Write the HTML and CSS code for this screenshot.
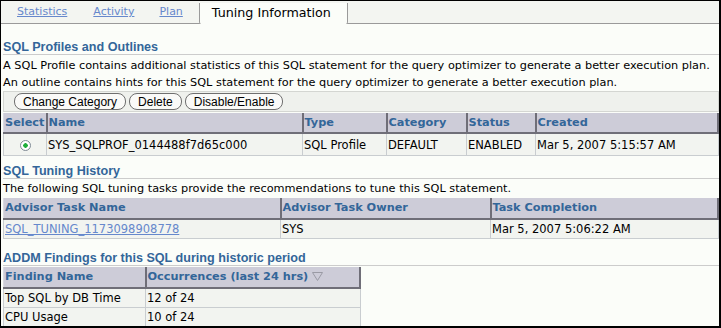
FILE: index.html
```html
<!DOCTYPE html>
<html>
<head>
<meta charset="utf-8">
<link rel="stylesheet" href="styles.css">
</head>
<body>
<div class="frame">
  <div class="tabs">
    <a class="tab tab-stats" href="#">Statistics</a>
    <a class="tab tab-act" href="#">Activity</a>
    <a class="tab tab-plan" href="#">Plan</a>
    <span class="tab active">Tuning Information</span>
  </div>

  <div class="content">
    <h2 class="heading first">SQL Profiles and Outlines</h2>
    <p class="desc">A SQL Profile contains additional statistics of this SQL statement for the query optimizer to generate a better execution plan.<br>An outline contains hints for this SQL statement for the query optimizer to generate a better execution plan.</p>
    <div class="toolbar">
      <button class="btn">Change Category</button>
      <button class="btn">Delete</button>
      <button class="btn">Disable/Enable</button>
    </div>
    <table class="grid t1">
      <colgroup><col class="c-sel"><col class="c-name"><col class="c-type"><col class="c-cat"><col class="c-status"><col></colgroup>
      <thead>
        <tr><th>Select</th><th>Name</th><th>Type</th><th>Category</th><th>Status</th><th>Created</th></tr>
      </thead>
      <tbody>
        <tr class="tall"><td class="center"><span class="radio"></span></td><td>SYS_SQLPROF_0144488f7d65c000</td><td>SQL Profile</td><td>DEFAULT</td><td>ENABLED</td><td>Mar 5, 2007 5:15:57 AM</td></tr>
      </tbody>
    </table>

    <h2 class="heading second">SQL Tuning History</h2>
    <p class="desc single">The following SQL tuning tasks provide the recommendations to tune this SQL statement.</p>
    <table class="grid t2">
      <colgroup><col class="c-task"><col class="c-owner"><col></colgroup>
      <thead>
        <tr><th>Advisor Task Name</th><th>Advisor Task Owner</th><th>Task Completion</th></tr>
      </thead>
      <tbody>
        <tr><td><a class="link" href="#">SQL_TUNING_1173098908778</a></td><td>SYS</td><td>Mar 5, 2007 5:06:22 AM</td></tr>
      </tbody>
    </table>

    <h2 class="heading third">ADDM Findings for this SQL during historic period</h2>
    <table class="grid t3">
      <colgroup><col class="c-find"><col></colgroup>
      <thead>
        <tr><th>Finding Name</th><th>Occurrences (last 24 hrs) <svg class="sort" width="11" height="9" viewBox="0 0 11 9"><polygon points="0.5,0.5 10.5,0.5 5.5,8.5" fill="none" stroke="#9a9aa4" stroke-width="1"/></svg></th></tr>
      </thead>
      <tbody>
        <tr><td>Top SQL by DB Time</td><td>12 of 24</td></tr>
        <tr><td>CPU Usage</td><td>10 of 24</td></tr>
      </tbody>
    </table>
  </div>
</div>
</body>
</html>
```

FILE: styles.css
```css
html, body {
  margin: 0;
  padding: 0;
  background: #fbfdf9;
}
.frame {
  box-sizing: border-box;
  width: 721px;
  height: 328px;
  border-style: solid;
  border-color: #000;
  border-width: 1px 2px 2px 1px;
  background: #fbfdf9;
  font-family: "DejaVu Sans", Verdana, sans-serif;
  font-size: 11.5px;
  color: #000;
  overflow: hidden;
}
.tabs {
  display: flex;
  align-items: flex-end;
  height: 22px;
  background: #f3f5f1;
  border-bottom: 1px solid #9a9a9a;
  padding-left: 16px;
}
.tab {
  font-size: 11px;
  color: #6688cc;
  text-decoration: underline;
  line-height: 22px;
}
.tab-stats { margin-right: 26px; }
.tab-act { margin-right: 25px; }
.tab-plan { margin-right: 16px; }
.tab.active {
  color: #000;
  text-decoration: none;
  font-size: 12.7px;
  background: #fbfdf9;
  border-left: 1px solid #9a9a9a;
  border-right: 1px solid #9a9a9a;
  border-radius: 0 0 2px 2px;
  height: 21px;
  line-height: 20px;
  padding: 0 16px 0 12px;
  margin-bottom: -1px;
}
.content {
  padding: 0 0 0 2px;
}
.heading {
  margin: 0;
  font-family: "Liberation Sans", Arial, sans-serif;
  font-size: 12.6px;
  font-weight: bold;
  color: #336699;
  line-height: 14px;
  border-bottom: 1px solid #cccccc;
}
.heading.first { margin-top: 16px; }
.heading.second { margin-top: 8px; }
.heading.third { margin-top: 12px; }
.desc {
  margin: 0;
  font-size: 11.3px;
  line-height: 17px;
  padding-top: 2px;
  white-space: nowrap;
}
.desc.single {
  padding-top: 1px;
}
.toolbar {
  display: flex;
  gap: 3px;
  background: #eff1ed;
  border: 1px solid #d4d6d2;
  padding: 1px 10px 0 10px;
  height: 18px;
}
.btn {
  font-family: "Liberation Sans", Arial, sans-serif;
  font-size: 12px;
  color: #000;
  background: #fafaf8;
  border: 1px solid #6f6f6f;
  border-radius: 8px;
  height: 17px;
  padding: 0 8px;
  line-height: 14px;
}
.grid {
  border-collapse: collapse;
  width: 716px;
  table-layout: fixed;
  margin-top: 1px;
}
.grid th {
  background: #cdccd8;
  color: #336699;
  font-weight: bold;
  font-size: 11.3px;
  text-align: left;
  height: 20px;
  padding: 0 1px;
  line-height: 14px;
  border-right: 2px solid #6f6e78;
  border-bottom: 2px solid #6f6e78;
  border-left: 1px solid #d8d8e0;
  white-space: nowrap;
}
.t1 th {
  height: 19px;
}
.grid td {
  background: #f2f4f0;
  border: 1px solid #c9cdd0;
  padding: 0 1px;
  height: 18px;
  line-height: 14px;
  white-space: nowrap;
}
.grid tr.tall td {
  height: 21px;
}
.center {
  text-align: center;
}
.c-sel { width: 43px; }
.c-name { width: 256px; }
.c-type { width: 84px; }
.c-cat { width: 80px; }
.c-status { width: 69px; }
.c-task { width: 277px; }
.c-owner { width: 210px; }
.c-find { width: 142px; }
.t3 { width: 358px; }
.radio {
  display: inline-block;
  box-sizing: border-box;
  width: 11px;
  height: 11px;
  border-radius: 50%;
  border: 1px solid #7f8a94;
  background: radial-gradient(circle, #1fae3a 0 2px, #ffffff 2.5px);
  vertical-align: middle;
  margin-left: 1px;
}
.link {
  color: #6688cc;
  text-decoration: underline;
}
.sort {
  vertical-align: -1px;
}
```
